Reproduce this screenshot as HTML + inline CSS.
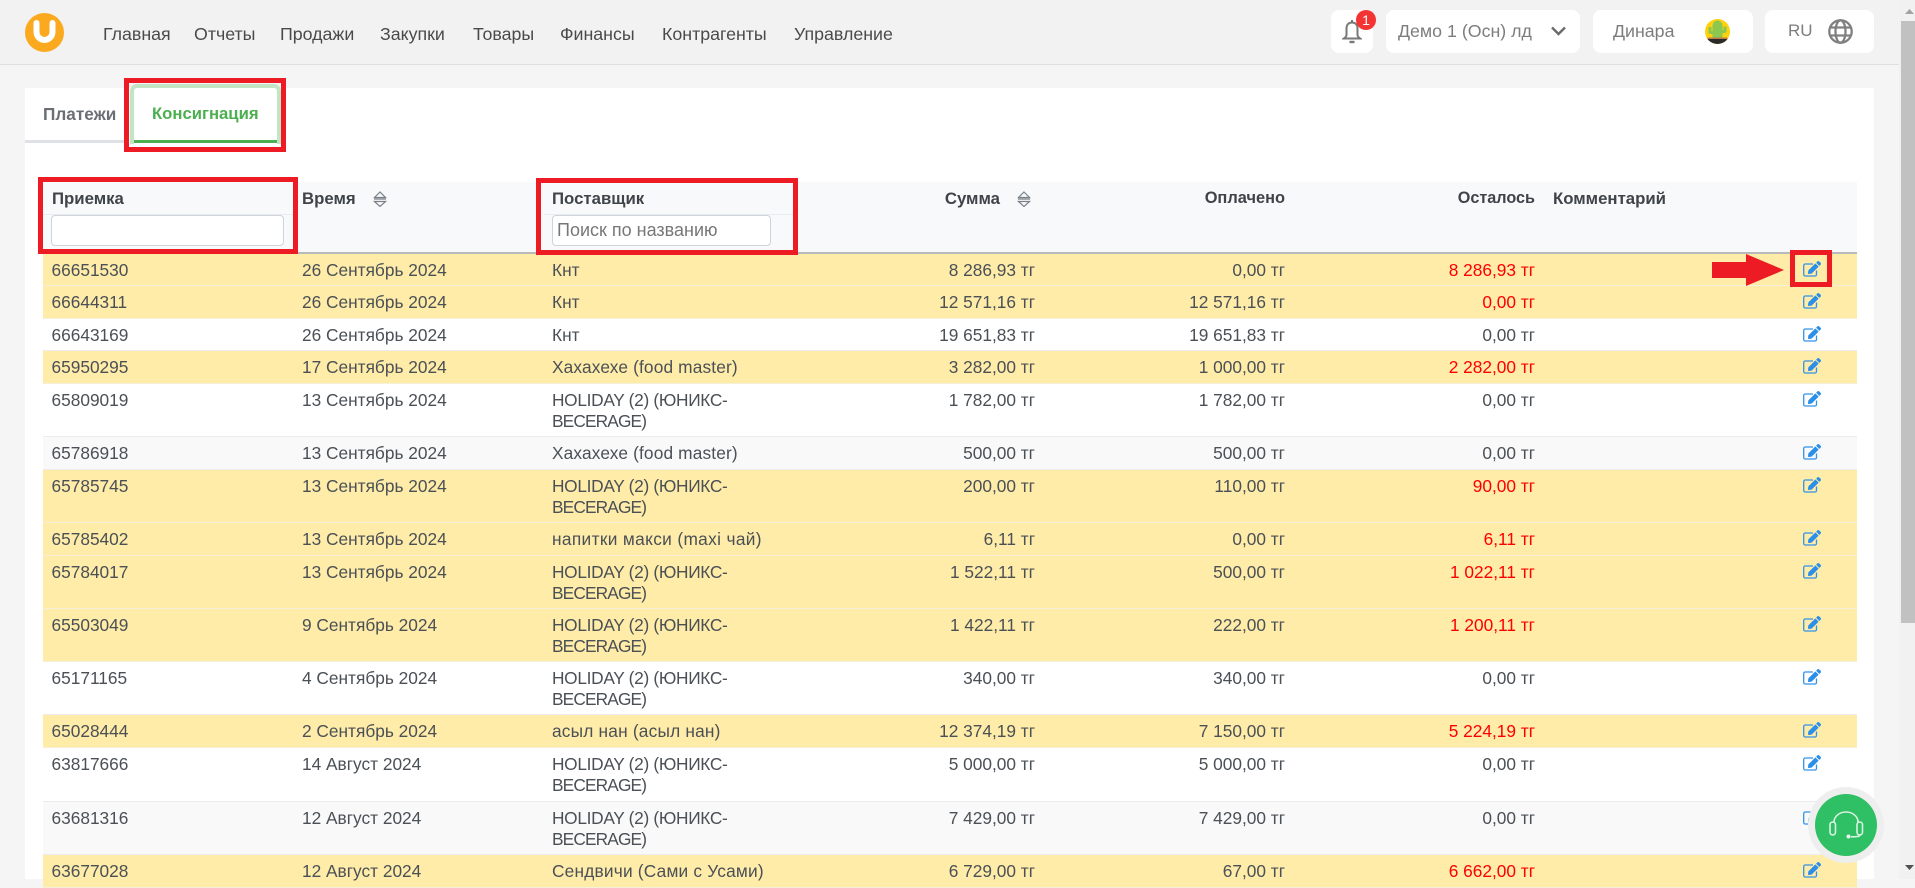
<!DOCTYPE html>
<html lang="ru"><head><meta charset="utf-8"><title>Консигнация</title>
<style>
html,body{margin:0;padding:0;width:1915px;height:879px;overflow:hidden;background:#f5f5f5;font-family:"Liberation Sans",sans-serif;color:#4b5056}
*{box-sizing:border-box}
.a{position:absolute;white-space:nowrap}
#hdr{position:absolute;left:0;top:0;width:1899px;height:65px;background:#f2f2f2;border-bottom:1px solid #dfdfdf}
.nav{top:23px;font-size:17.8px;line-height:22px;color:#4a4a4a}
.box{position:absolute;top:10px;height:43px;background:#fff;border-radius:8px}
.g{top:20px;font-size:17.8px;line-height:22px;color:#7d7d7d}
#card{position:absolute;left:25px;top:88px;width:1849px;height:791px;background:#fff}
.frame{position:absolute;border:5px solid #ed1c24;z-index:5}
table{position:absolute;left:43px;top:182px;width:1814px;table-layout:fixed;border-collapse:separate;border-spacing:0;font-size:17.3px;line-height:21px}
th{height:72px;background:#f8f9fa;border-bottom:2px solid #b9b9b9;padding:6px 8px 0;vertical-align:top;text-align:left;font-size:16.8px;color:#3f4449}
td{padding:5.5px 8px 0;vertical-align:top;border-bottom:1px solid #ececec;white-space:nowrap}
.r{text-align:right}
tr.y td{background:#feeca8;border-bottom-color:#f6f0d8}
tr.s td{background:#f9f9f9}
td.red{color:#f00}
td.e{padding:7px 36px 0 0;text-align:right}
td.e svg{display:block;margin-left:auto}
td.n{padding-left:8.5px}
.h1{letter-spacing:-.3px}
.h2{letter-spacing:-.85px}
.hl{position:absolute;top:214px;height:1px;background:#e9ecef}
input::placeholder{color:#777;opacity:1}
</style></head><body>
<svg width="0" height="0" style="position:absolute"><defs>
<symbol id="ed" viewBox="0 0 18 16"><path d="M13.500 9.500V13.500a1.500 1.500 0 0 1-1.500 1.500H2.200a1.500 1.500 0 0 1-1.500-1.500V4.500A1.500 1.500 0 0 1 2.200 3H10" fill="none" stroke="#3393ea" stroke-width="1.300"/><path transform="scale(.03125)" fill="#2b8ee8" d="M402.6 83.2l90.2 90.2c3.8 3.8 3.8 10 0 13.8L274.4 405.6l-92.8 10.3c-12.4 1.4-22.9-9.1-21.5-21.5l10.3-92.8L388.8 83.2c3.8-3.8 10-3.8 13.8 0zm162-22.9l-48.8-48.8c-15.2-15.2-39.9-15.2-55.2 0l-35.4 35.4c-3.8 3.8-3.8 10 0 13.8l90.2 90.2c3.8 3.8 10 3.8 13.8 0l35.4-35.4c15.2-15.3 15.2-40 0-55.2z"/></symbol>
<symbol id="so" viewBox="0 0 14 16"><path d="M7 1l5.5 5.5h-11zM1 8h12M1.5 10.5h11L7 15.5z" fill="none" stroke="#7c8289" stroke-width="1.2"/></symbol>
</defs></svg>

<div id="hdr"></div>
<svg class="a" style="left:25px;top:13px" width="39" height="39" viewBox="25 13 39 39"><circle cx="44.5" cy="32.5" r="19.5" fill="#fbaa1f"/><path d="M36.5 23v9a8 8 0 0 0 16 0v-9" fill="none" stroke="#fff" stroke-width="6" stroke-linecap="round"/></svg>
<span class="a nav" style="left:103px">Главная</span>
<span class="a nav" style="left:194px">Отчеты</span>
<span class="a nav" style="left:280px">Продажи</span>
<span class="a nav" style="left:380px">Закупки</span>
<span class="a nav" style="left:473px">Товары</span>
<span class="a nav" style="left:560px">Финансы</span>
<span class="a nav" style="left:662px">Контрагенты</span>
<span class="a nav" style="left:794px">Управление</span>

<div class="box" style="left:1331px;width:42px"></div>
<svg class="a" style="left:1342px;top:19px" width="20" height="25" viewBox="0 0 19 25"><path d="M9.5 1v2.5M9.5 3.5c-3.5 0-5.5 2.5-5.5 6v6.5c0 1-.6 2-2.6 3.500h16.200c-2-1.500-2.600-2.500-2.600-3.500V9.500c0-3.500-2-6-5.500-6z" fill="none" stroke="#777" stroke-width="2"/><path d="M7 23h5" stroke="#777" stroke-width="2.400"/></svg>
<div class="a" style="left:1356px;top:10px;width:20px;height:20px;border-radius:50%;background:#f43333;color:#fff;font-size:14px;line-height:20px;text-align:center">1</div>
<div class="box" style="left:1386px;width:194px"></div>
<span class="a g" style="left:1398px">Демо 1 (Осн) лд</span>
<svg class="a" style="left:1550px;top:26px" width="17" height="10" viewBox="0 0 17 10"><path d="M2 1.500l6.500 6.500 6.500-6.500" fill="none" stroke="#6b6b6b" stroke-width="2.400"/></svg>
<div class="box" style="left:1593px;width:160px"></div>
<span class="a g" style="left:1613px">Динара</span>
<svg class="a" style="left:1705px;top:19px" width="25" height="25" viewBox="0 0 25 25"><defs><clipPath id="cp"><circle cx="12.500" cy="12.500" r="12.500"/></clipPath></defs><g clip-path="url(#cp)"><rect width="25" height="25" fill="#ffd10a"/><path d="M7.500 19V6.500a5 5 0 0 1 10 0V19z" fill="#8cc850"/><path d="M8 15H5.500a2 2 0 0 1-2-2V8h3v4h2zM17 14h2.500a2 2 0 0 0 2-2V7.500h-3V11h-2z" fill="#8cc850"/><path d="M2 19.500h21c-1 3.500-4 5.500-10.500 5.500S3 23 2 19.500z" fill="#2a2a2a"/><rect x="3" y="18.500" width="19" height="1.500" fill="#c07a45"/></g></svg>
<div class="box" style="left:1765px;width:109px"></div>
<span class="a g" style="left:1788px;font-size:17px">RU</span>
<svg class="a" style="left:1828px;top:19px" width="25" height="25" viewBox="0 0 25 25" fill="none" stroke="#808080" stroke-width="2.300"><circle cx="12.500" cy="12.500" r="11.200"/><ellipse cx="12.500" cy="12.500" rx="5" ry="11.200"/><path d="M2 8.500h21M2 16.500h21"/></svg>

<div id="card"></div>
<div class="a" style="left:25px;top:140px;width:100px;height:3px;background:#dee2e6"></div>
<span class="a" style="left:43px;top:103px;font-size:17.2px;line-height:22px;font-weight:bold;color:#6a6f75">Платежи</span>
<div class="a" style="left:130px;top:84px;width:151px;height:60px;border:4px solid #c3e5c5;border-bottom:0;border-radius:7px 7px 0 0;background:#fff"></div>
<div class="a" style="left:134px;top:140px;width:143px;height:3px;background:#4caf50"></div>
<span class="a" style="left:152px;top:103px;font-size:16.7px;line-height:22px;font-weight:bold;color:#4caf50">Консигнация</span>
<div class="frame" style="left:124px;top:78px;width:162px;height:74px"></div>

<table>
<colgroup><col style="width:251px"><col style="width:250px"><col style="width:250px"><col style="width:249px"><col style="width:250px"><col style="width:250px"><col style="width:124px"><col style="width:190px"></colgroup>
<thead><tr>
<th style="padding-left:9px">Приемка</th><th>Время</th><th>Поставщик</th><th class="r">Сумма<span style="display:inline-block;width:35px"></span></th><th class="r" style="font-size:16.4px">Оплачено</th><th class="r" style="font-size:16.2px">Осталось</th><th style="padding-left:10px">Комментарий</th><th></th>
</tr></thead>
<tbody>
<tr class="y" style="height:32px"><td class="n">66651530</td><td>26 Сентябрь 2024</td><td>Кнт</td><td class="r">8 286,93 тг</td><td class="r">0,00 тг</td><td class="r red">8 286,93 тг</td><td></td><td class="e"><svg width="18" height="16"><use href="#ed"/></svg></td></tr>
<tr class="y" style="height:33px"><td class="n">66644311</td><td>26 Сентябрь 2024</td><td>Кнт</td><td class="r">12 571,16 тг</td><td class="r">12 571,16 тг</td><td class="r red">0,00 тг</td><td></td><td class="e"><svg width="18" height="16"><use href="#ed"/></svg></td></tr>
<tr style="height:32px"><td class="n">66643169</td><td>26 Сентябрь 2024</td><td>Кнт</td><td class="r">19 651,83 тг</td><td class="r">19 651,83 тг</td><td class="r">0,00 тг</td><td></td><td class="e"><svg width="18" height="16"><use href="#ed"/></svg></td></tr>
<tr class="y" style="height:33px"><td class="n">65950295</td><td>17 Сентябрь 2024</td><td style="letter-spacing:.15px">Хахахехе (food master)</td><td class="r">3 282,00 тг</td><td class="r">1 000,00 тг</td><td class="r red">2 282,00 тг</td><td></td><td class="e"><svg width="18" height="16"><use href="#ed"/></svg></td></tr>
<tr style="height:53px"><td class="n">65809019</td><td>13 Сентябрь 2024</td><td><span class="h1">HOLIDAY (2) (ЮНИКС-</span><br><span class="h2">BECERAGE)</span></td><td class="r">1 782,00 тг</td><td class="r">1 782,00 тг</td><td class="r">0,00 тг</td><td></td><td class="e"><svg width="18" height="16"><use href="#ed"/></svg></td></tr>
<tr class="s" style="height:33px"><td class="n">65786918</td><td>13 Сентябрь 2024</td><td style="letter-spacing:.15px">Хахахехе (food master)</td><td class="r">500,00 тг</td><td class="r">500,00 тг</td><td class="r">0,00 тг</td><td></td><td class="e"><svg width="18" height="16"><use href="#ed"/></svg></td></tr>
<tr class="y" style="height:53px"><td class="n">65785745</td><td>13 Сентябрь 2024</td><td><span class="h1">HOLIDAY (2) (ЮНИКС-</span><br><span class="h2">BECERAGE)</span></td><td class="r">200,00 тг</td><td class="r">110,00 тг</td><td class="r red">90,00 тг</td><td></td><td class="e"><svg width="18" height="16"><use href="#ed"/></svg></td></tr>
<tr class="y" style="height:33px"><td class="n">65785402</td><td>13 Сентябрь 2024</td><td style="letter-spacing:.35px">напитки макси (maxi чай)</td><td class="r">6,11 тг</td><td class="r">0,00 тг</td><td class="r red">6,11 тг</td><td></td><td class="e"><svg width="18" height="16"><use href="#ed"/></svg></td></tr>
<tr class="y" style="height:53px"><td class="n">65784017</td><td>13 Сентябрь 2024</td><td><span class="h1">HOLIDAY (2) (ЮНИКС-</span><br><span class="h2">BECERAGE)</span></td><td class="r">1 522,11 тг</td><td class="r">500,00 тг</td><td class="r red">1 022,11 тг</td><td></td><td class="e"><svg width="18" height="16"><use href="#ed"/></svg></td></tr>
<tr class="y" style="height:53px"><td class="n">65503049</td><td>9 Сентябрь 2024</td><td><span class="h1">HOLIDAY (2) (ЮНИКС-</span><br><span class="h2">BECERAGE)</span></td><td class="r">1 422,11 тг</td><td class="r">222,00 тг</td><td class="r red">1 200,11 тг</td><td></td><td class="e"><svg width="18" height="16"><use href="#ed"/></svg></td></tr>
<tr style="height:53px"><td class="n">65171165</td><td>4 Сентябрь 2024</td><td><span class="h1">HOLIDAY (2) (ЮНИКС-</span><br><span class="h2">BECERAGE)</span></td><td class="r">340,00 тг</td><td class="r">340,00 тг</td><td class="r">0,00 тг</td><td></td><td class="e"><svg width="18" height="16"><use href="#ed"/></svg></td></tr>
<tr class="y" style="height:33px"><td class="n">65028444</td><td>2 Сентябрь 2024</td><td style="letter-spacing:.2px">асыл нан (асыл нан)</td><td class="r">12 374,19 тг</td><td class="r">7 150,00 тг</td><td class="r red">5 224,19 тг</td><td></td><td class="e"><svg width="18" height="16"><use href="#ed"/></svg></td></tr>
<tr style="height:54px"><td class="n">63817666</td><td>14 Август 2024</td><td><span class="h1">HOLIDAY (2) (ЮНИКС-</span><br><span class="h2">BECERAGE)</span></td><td class="r">5 000,00 тг</td><td class="r">5 000,00 тг</td><td class="r">0,00 тг</td><td></td><td class="e"><svg width="18" height="16"><use href="#ed"/></svg></td></tr>
<tr class="s" style="height:53px"><td class="n">63681316</td><td>12 Август 2024</td><td><span class="h1">HOLIDAY (2) (ЮНИКС-</span><br><span class="h2">BECERAGE)</span></td><td class="r">7 429,00 тг</td><td class="r">7 429,00 тг</td><td class="r">0,00 тг</td><td></td><td class="e"><svg width="18" height="16"><use href="#ed"/></svg></td></tr>
<tr class="y" style="height:33px"><td class="n">63677028</td><td>12 Август 2024</td><td style="letter-spacing:.2px">Сендвичи (Сами с Усами)</td><td class="r">6 729,00 тг</td><td class="r">67,00 тг</td><td class="r red">6 662,00 тг</td><td></td><td class="e"><svg width="18" height="16"><use href="#ed"/></svg></td></tr>
</tbody></table>

<div class="hl" style="left:43px;width:251px"></div>
<div class="hl" style="left:544px;width:250px"></div>
<input class="a" aria-label="Приемка" style="left:51px;top:215px;width:233px;height:31px;border:1px solid #ced4da;border-radius:4px;background:#fff">
<input class="a" aria-label="Поставщик" placeholder="Поиск по названию" style="left:552px;top:215px;width:219px;height:31px;border:1px solid #ced4da;border-radius:4px;background:#fff;padding:0 4px;font:18px 'Liberation Sans',sans-serif;color:#777">
<svg class="a" style="left:373px;top:191px" width="14" height="16"><use href="#so"/></svg>
<svg class="a" style="left:1017px;top:191px" width="14" height="16"><use href="#so"/></svg>

<div class="frame" style="left:38px;top:177px;width:260px;height:77px"></div>
<div class="frame" style="left:536px;top:178px;width:262px;height:77px"></div>
<div class="frame" style="left:1790px;top:250px;width:42px;height:37px"></div>
<svg class="a" style="left:1712px;top:254px;z-index:5" width="72" height="32" viewBox="0 0 72 32"><path d="M0 8h34V0l38 16-38 16v-8H0z" fill="#ed1c24"/></svg>

<svg class="a" style="left:1808px;top:787px;z-index:6" width="76" height="76" viewBox="-38 -38 76 76"><circle r="38" fill="#eee"/><circle r="31" fill="#2fbf64"/><g fill="none" stroke="#d8f3e2" stroke-width="1.600"><path d="M-12-2v-1a12 10 0 0 1 24 0v1"/><rect x="-16" y="-3" width="5.500" height="13" rx="2.700"/><rect x="11" y="-3" width="5.500" height="13" rx="2.700"/><path d="M14 10c0 1.500-3 1.800-9 1.800"/></g><circle cx="2.500" cy="11.500" r="2" fill="#e6f8ec"/></svg>

<div class="a" style="left:1899px;top:0;width:16px;height:879px;background:#f1f1f1"></div>
<div class="a" style="left:1901px;top:21px;width:14px;height:602px;background:#c1c1c1"></div>
<svg class="a" style="left:1905px;top:9px" width="9" height="5"><path d="M4.500 0L9 5H0z" fill="#a3a3a3"/></svg>
<svg class="a" style="left:1905px;top:865px" width="9" height="5"><path d="M0 0h9L4.500 5z" fill="#505050"/></svg>
</body></html>
